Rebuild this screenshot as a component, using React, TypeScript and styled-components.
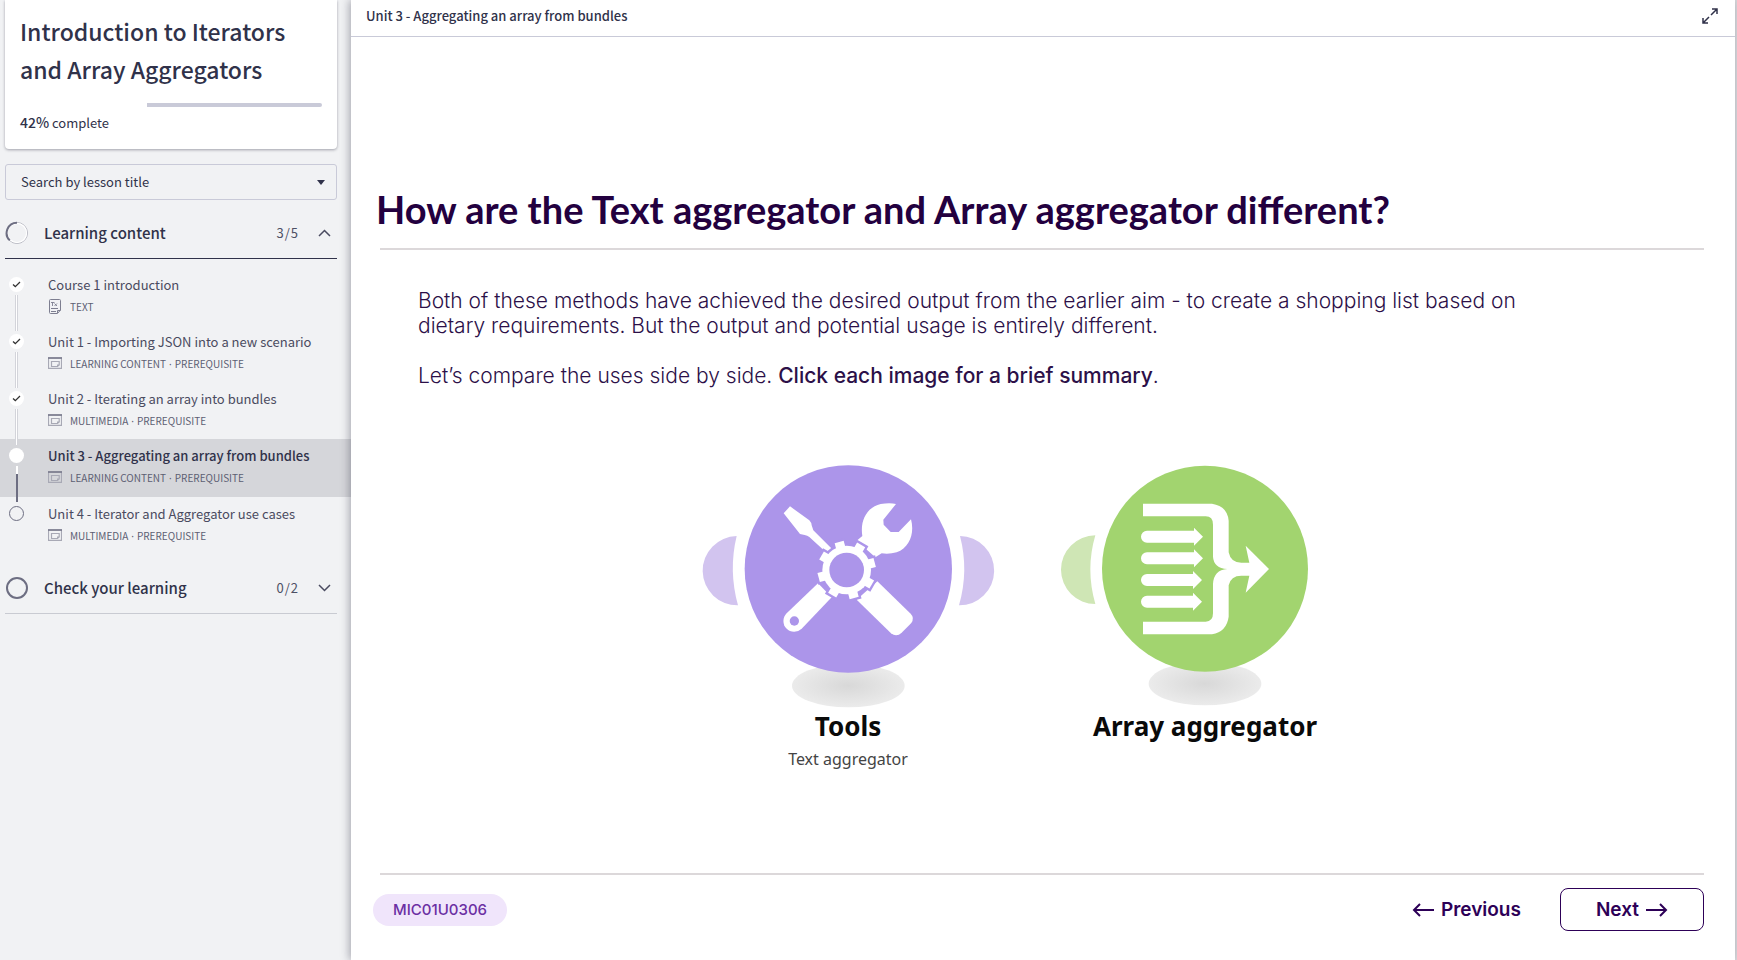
import React from "react";
import styled, { createGlobalStyle, css } from "styled-components";

const GlobalStyle = createGlobalStyle`
  *, *::before, *::after { box-sizing: border-box; }
  body { margin: 0; background: #f1f2f4; }
  h1, h2, p, ul { margin: 0; padding: 0; }
  ul { list-style: none; }
  button, select { font: inherit; color: inherit; }
`;

const sans = `"Noto Sans CJK SC", "Noto Sans", sans-serif`;
const inter = `Inter, "Liberation Sans", sans-serif`;

const Page = styled.div`
  display: flex;
  min-height: 100vh;
  padding-right: 2px;
  background: #d9d9dc;
  font-family: ${sans};
  color: #30324a;
`;

const Sidebar = styled.aside`
  flex: 0 0 351px;
  background: #f1f2f4;
`;

const CourseCard = styled.section`
  margin: 0 14px 0 5px;
  padding: 12px 15px 16px;
  background: #fff;
  border-radius: 0 0 4px 4px;
  box-shadow: 0 1px 3px rgba(40, 40, 60, 0.4);
`;

const CourseTitle = styled.h1`
  font-size: 23px;
  line-height: 38px;
  font-weight: 500;
`;

const Track = styled.div`
  height: 4px;
  margin-top: 15px;
  border-radius: 2px;
  background: #fff;
  overflow: hidden;
`;

const TrackRest = styled.div`
  height: 100%;
  margin-left: auto;
  background: #c9cad8;
`;

const Completion = styled.p`
  margin-top: 5px;
  font-size: 13px;
  line-height: 21px;
  strong { font-size: 14px; font-weight: 500; }
`;

const SearchBox = styled.div`
  display: grid;
  align-items: center;
  margin: 15px 14px 0 5px;
  & > * { grid-area: 1 / 1; }
  svg { justify-self: end; margin-right: 12px; pointer-events: none; }
`;

const SearchSelect = styled.select`
  appearance: none;
  width: 100%;
  height: 36px;
  padding: 0 32px 2px 15px;
  border: 1px solid #c9cad8;
  border-radius: 3px;
  background: transparent;
  font-size: 13px;
`;

const SectionHead = styled.button<{ $open?: boolean }>`
  display: flex;
  align-items: center;
  width: calc(100% - 19px);
  height: 51px;
  margin: 8px 14px 0 5px;
  padding: 0 6px 0 0;
  border: 0;
  border-bottom: 1px solid ${(p) => (p.$open ? "#30324a" : "#c9cbd2")};
  background: none;
  text-align: left;
  cursor: pointer;
`;

const SectionName = styled.span`
  flex: 1;
  margin-left: 15px;
  padding-bottom: 2px;
  font-size: 15px;
  font-weight: 500;
`;

const SectionCount = styled.span`
  margin-right: 19px;
  padding-bottom: 2px;
  font-size: 13px;
  letter-spacing: 1px;
  color: #4e5064;
`;

const LessonList = styled.ul`
  margin: 9px 0;
`;

const Lesson = styled.li<{ $active?: boolean }>`
  height: ${(p) => (p.$active ? 58 : 57)}px;
  background: ${(p) => (p.$active ? "#d5d6da" : "transparent")};
`;

const LessonLink = styled.a`
  display: flex;
  height: 100%;
  color: inherit;
  text-decoration: none;
`;

const Rail = styled.span`
  position: relative;
  z-index: 1;
  display: flex;
  flex-direction: column;
  align-items: center;
  gap: 3px;
  width: 33px;
  margin-bottom: -6px;
  padding-top: 9px;
`;

const Dot = styled.span<{ $hollow?: boolean }>`
  display: flex;
  align-items: center;
  justify-content: center;
  width: 15px;
  height: 15px;
  border-radius: 50%;
  ${(p) =>
    p.$hollow
      ? css`border: 1px solid #6d6e82;`
      : css`background: #fff;`}
`;

const Connector = styled.span<{ $pending?: boolean }>`
  width: 3px;
  height: 36px;
  ${(p) =>
    p.$pending
      ? css`background: linear-gradient(#fff 8px, #6d6e82 8px); width: 2px;`
      : css`background: #fff; border: solid #d3d4da; border-width: 0 1px;`}
`;

const LessonText = styled.span`
  display: flex;
  flex-direction: column;
  margin-left: 15px;
  padding-top: 7px;
`;

const LessonTitle = styled.span<{ $active?: boolean }>`
  font-size: 13px;
  line-height: 20px;
  font-weight: ${(p) => (p.$active ? 500 : 400)};
  color: ${(p) => (p.$active ? "#30324a" : "#4a4b60")};
`;

const LessonMeta = styled.span`
  display: flex;
  align-items: center;
  gap: 8px;
  height: 22px;
  font-size: 10px;
  color: #5d5f73;
  svg { width: 14px; }
`;

const MetaItem = styled.span`
  & + &::before {
    content: "·";
    margin: 0 3px 0 -5px;
    font-family: "Noto Sans", sans-serif;
  }
`;

const Main = styled.main`
  position: relative;
  z-index: 2;
  flex: 1;
  min-width: 0;
  display: flex;
  flex-direction: column;
  background: #fff;
  box-shadow: -2px 0 8px rgba(40, 40, 60, 0.35);
`;

const TopBar = styled.header`
  display: flex;
  align-items: center;
  justify-content: space-between;
  height: 37px;
  padding: 0 17px 5px 15px;
  border-bottom: 1px solid #c9cad8;
  font-size: 13px;
  font-weight: 500;
`;

const IconButton = styled.button`
  display: flex;
  padding: 0;
  border: 0;
  background: none;
  cursor: pointer;
`;

const Slide = styled.article`
  flex: 1;
  display: flex;
  flex-direction: column;
  padding: 148px 31px 0 29px;
  font-family: ${inter};
  color: #2c1048;
`;

const SlideTitle = styled.h2`
  margin-left: -4px;
  padding-bottom: 15px;
  font-family: Lato, ${inter};
  font-size: 38px;
  line-height: 48px;
  font-weight: 700;
  color: #23003f;
`;

const Rule = styled.hr`
  width: 100%;
  height: 2px;
  margin: 0;
  border: 0;
  background: #dcd8da;
`;

const Copy = styled.div`
  display: grid;
  gap: 25px;
  padding: 38px 160px 0 38px;
  font-size: 21px;
  line-height: 25px;
  font-weight: 300;
  strong { font-weight: 500; }
`;

const Nodes = styled.div`
  flex: 1;
  display: flex;
  align-items: flex-start;
  justify-content: center;
  gap: 57px;
  padding: 75px 31px 0 0;
`;

const NodeButton = styled.button`
  display: flex;
  flex-direction: column;
  align-items: center;
  padding: 0;
  border: 0;
  background: none;
  font-family: "Noto Sans", "Open Sans", sans-serif;
  cursor: pointer;
`;

const NodeName = styled.span`
  font-size: 26px;
  line-height: 34px;
  font-weight: 700;
  color: #0a0a0a;
`;

const NodeDetail = styled.span`
  font-size: 16px;
  line-height: 32px;
  color: #444;
`;

const Footer = styled.footer`
  display: flex;
  align-items: center;
  height: 85px;
  padding-bottom: 16px;
`;

const Code = styled.span`
  margin: 0 auto 0 -7px;
  padding: 0 20px;
  border-radius: 16px;
  background: #f0e5fb;
  font-size: 15px;
  line-height: 32px;
  font-weight: 500;
  color: #6b2fa3;
`;

const NavButton = styled.button<{ $outlined?: boolean }>`
  display: flex;
  align-items: center;
  justify-content: center;
  gap: 7px;
  height: 43px;
  padding: 0 ${(p) => (p.$outlined ? 35 : 0)}px;
  margin-left: ${(p) => (p.$outlined ? 39 : 0)}px;
  border: ${(p) => (p.$outlined ? "1px solid #2d0057" : "0")};
  border-radius: 8px;
  background: none;
  font-size: 19px;
  font-weight: 600;
  color: #2d0057;
  cursor: pointer;
`;

const Chevron = ({ up }: { up?: boolean }) => (
  <svg width="13" height="8" viewBox="0 0 13 8" fill="none" stroke="#4a4b60" strokeWidth="1.5">
    <path d={up ? "M1 7 6.500 1.500 12 7" : "M1 1 6.500 6.500 12 1"} />
  </svg>
);

const ProgressRing = () => (
  <svg width="24" height="24" viewBox="0 0 24 24" fill="none">
    <circle cx="12" cy="12" r="10.500" stroke="#b4b5bf" />
    <circle cx="12" cy="12" r="9.600" stroke="#fff" strokeWidth="1.200" />
    <path d="M12 1.700A10.300 10.300 0 0 0 4.800 19.400" stroke="#6d6e82" strokeWidth="2" />
  </svg>
);

const EmptyRing = () => (
  <svg width="24" height="24" viewBox="0 0 24 24" fill="none">
    <circle cx="12" cy="12" r="10" stroke="#6d6e82" strokeWidth="2" />
  </svg>
);

const Check = () => (
  <svg width="9" height="7" viewBox="0 0 9 7" fill="none" stroke="#333" strokeWidth="1.300">
    <path d="M1 3.500 3.300 5.600 8 1" />
  </svg>
);

const DocIcon = () => (
  <svg height="15" viewBox="0 0 14 15" fill="none" stroke="#7d7e90">
    <path d="M1.500 1.500Q1.500.500 2.500.500H11.500Q12.500.500 12.500 1.500V11L9.500 14.500H2.500Q1.500 14.500 1.500 13.500ZM9.500 14V11.500H12.500M3 9.500H10M3 12.500H8" />
    <path d="M3 3.500H6.500M4.500 3.500V7M6.500 4.500 9 7M9 4.500 6.500 7" strokeWidth=".900" />
  </svg>
);

const WindowIcon = () => (
  <svg height="12" viewBox="0 0 14 12" fill="none" stroke="#a8a9b5" strokeWidth="1.200">
    <path d="M.500 1V11.400H13.500V1M3.500 4.500H11.200V8L9.500 9.500H3.500Z" />
    <path d="M11.500 7.500H9V9.800Z" fill="#a8a9b5" stroke="none" />
    <path d="M0 1H14" stroke="#7d7e90" strokeWidth="1.800" />
  </svg>
);

const ExpandIcon = () => (
  <svg width="16" height="16" viewBox="0 0 16 16" fill="none" stroke="#30324a" strokeWidth="1.500">
    <path d="M9 7 15 1M10 1H15V6M7 9 1 15M1 10V15H6" />
  </svg>
);

const Arrow = ({ left }: { left?: boolean }) => (
  <svg width="22" height="14" viewBox="0 0 22 14" fill="none" stroke="#2d0057" strokeWidth="2">
    <path d={left ? "M22 7H2M8 1 2 7 8 13" : "M0 7H20M14 1 20 7 14 13"} />
  </svg>
);

const Shadow = ({ id, cx, cy }: { id: string; cx: number; cy: number }) => (
  <>
    <radialGradient id={id}>
      <stop offset="0" stopColor="#d8d8d8" />
      <stop offset="1" stopColor="#ebebeb" />
    </radialGradient>
    <ellipse cx={cx} cy={cy} rx="169" ry="65" fill={`url(#${id})`} />
  </>
);

const Gear = () => (
  <>
    <circle cx="470" cy="358" r="73" />
    {[-105, -60, -15, 30, 75, 120, 165, 210].map((angle) => (
      <path key={angle} d="M530 344H557V372H530Z" transform={`rotate(${angle} 470 358)`} />
    ))}
  </>
);

const ToolsArt = () => (
  <svg width="300" height="246" viewBox="24 37 900 738">
    <Shadow id="tools-shadow" cx={475} cy={705} />
    <g fill="#d2c4ef">
      <path d="M140 256A104 104 0 0 0 144 464Q115 360 140 256Z" />
      <path d="M810 256A104 104 0 0 1 807 464Q837 360 810 256Z" />
    </g>
    <circle cx="475" cy="355" r="311" fill="#ac95ea" />
    <g fill="#fff">
      <path d="M281 188 300 167 358 209Q364 215 365 224L370 239 424 293 408 305 358 259Q352 254 344 253L330 250Z" />
      <path d="M618 160 580 207 581 222 602 244H626L663 206C674 246 660 290 620 305Q598 311 575 308L556 320 500 270 517 256C509 205 535 168 572 160Q600 156 618 160Z" />
      <path d="M384 398 290 488A31 31 0 0 0 335 534L425 440Z" />
      <path d="M562 392 662 489Q674 501 664 517L635 546Q620 560 603 548L500 447Z" />
    </g>
    <circle cx="313" cy="511" r="14" fill="#ac95ea" />
    <g fill="#ac95ea" stroke="#ac95ea" strokeWidth="14"><Gear /></g>
    <g fill="#fff"><Gear /></g>
    <circle cx="470" cy="358" r="52" fill="#ac95ea" />
  </svg>
);

const ArrayArt = () => (
  <svg width="300" height="246" viewBox="45 37 900 738">
    <Shadow id="array-shadow" cx={495} cy={699} />
    <path d="M166 254A103 103 0 0 0 166 460Q136 356 166 254Z" fill="#cfe6b5" />
    <circle cx="495" cy="354" r="309" fill="#a2d46f" />
    <g fill="#fff">
      <path d="M309 159H516Q562 166 566 210V305Q572 336 604 336H628L617 285 687 355 617 426 628 375H604Q572 375 566 404V498Q560 543 516 551H309V513H497Q519 513 519 488V400Q521 358 562 355Q521 352 519 318V222Q519 197 497 197H309Z" />
      {[
        [489, 258],
        [489, 323],
        [486, 388],
        [486, 453],
      ].map(([x, y]) => (
        <path key={y} d={`M321 ${y - 18}H${x - 27}V${y - 27}L${x} ${y}L${x - 27} ${y + 27}V${y + 18}H321A18 18 0 0 1 321 ${y - 18}Z`} />
      ))}
    </g>
  </svg>
);

type LessonData = {
  title: string;
  meta: string[];
  state: "done" | "current" | "todo";
  doc?: boolean;
};

const lessons: LessonData[] = [
  { title: "Course 1 introduction", meta: ["TEXT"], state: "done", doc: true },
  { title: "Unit 1 - Importing JSON into a new scenario", meta: ["LEARNING CONTENT", "PREREQUISITE"], state: "done" },
  { title: "Unit 2 - Iterating an array into bundles", meta: ["MULTIMEDIA", "PREREQUISITE"], state: "done" },
  { title: "Unit 3 - Aggregating an array from bundles", meta: ["LEARNING CONTENT", "PREREQUISITE"], state: "current" },
  { title: "Unit 4 - Iterator and Aggregator use cases", meta: ["MULTIMEDIA", "PREREQUISITE"], state: "todo" },
];

const progress = 42;

export default function App() {
  return (
    <>
      <GlobalStyle />
      <Page>
        <Sidebar>
          <CourseCard>
            <CourseTitle>Introduction to Iterators and Array Aggregators</CourseTitle>
            <Track role="progressbar" aria-label="Course progress" aria-valuenow={progress} aria-valuemin={0} aria-valuemax={100}>
              <TrackRest style={{ width: `${100 - progress}%` }} />
            </Track>
            <Completion><strong>{progress}%</strong> complete</Completion>
          </CourseCard>
          <SearchBox>
            <SearchSelect aria-label="Search by lesson title">
              <option>Search by lesson title</option>
            </SearchSelect>
            <svg width="8" height="5" viewBox="0 0 8 5" fill="#30324a"><path d="M0 0H8L4 5Z" /></svg>
          </SearchBox>
          <SectionHead $open aria-expanded="true">
            <ProgressRing />
            <SectionName>Learning content</SectionName>
            <SectionCount>3/5</SectionCount>
            <Chevron up />
          </SectionHead>
          <LessonList>
            {lessons.map((lesson, i) => {
              const active = lesson.state === "current";
              return (
                <Lesson key={lesson.title} $active={active}>
                  <LessonLink href="#" aria-current={active ? "page" : undefined}>
                    <Rail>
                      <Dot $hollow={lesson.state === "todo"}>{lesson.state === "done" && <Check />}</Dot>
                      {i < lessons.length - 1 && <Connector $pending={active} />}
                    </Rail>
                    <LessonText>
                      <LessonTitle $active={active}>{lesson.title}</LessonTitle>
                      <LessonMeta>
                        {lesson.doc ? <DocIcon /> : <WindowIcon />}
                        {lesson.meta.map((item) => <MetaItem key={item}>{item}</MetaItem>)}
                      </LessonMeta>
                    </LessonText>
                  </LessonLink>
                </Lesson>
              );
            })}
          </LessonList>
          <SectionHead aria-expanded="false">
            <EmptyRing />
            <SectionName>Check your learning</SectionName>
            <SectionCount>0/2</SectionCount>
            <Chevron />
          </SectionHead>
        </Sidebar>
        <Main>
          <TopBar>
            <span>Unit 3 - Aggregating an array from bundles</span>
            <IconButton aria-label="Full screen"><ExpandIcon /></IconButton>
          </TopBar>
          <Slide>
            <SlideTitle>How are the Text aggregator and Array aggregator different?</SlideTitle>
            <Rule />
            <Copy>
              <p>
                Both of these methods have achieved the desired output from the earlier aim - to create a shopping list based on dietary requirements. But the output and potential usage is entirely different.
              </p>
              <p>Let’s compare the uses side by side. <strong>Click each image for a brief summary</strong>.</p>
            </Copy>
            <Nodes>
              <NodeButton>
                <ToolsArt />
                <NodeName>Tools</NodeName>
                <NodeDetail>Text aggregator</NodeDetail>
              </NodeButton>
              <NodeButton>
                <ArrayArt />
                <NodeName>Array aggregator</NodeName>
              </NodeButton>
            </Nodes>
            <Rule />
            <Footer>
              <Code>MIC01U0306</Code>
              <NavButton><Arrow left />Previous</NavButton>
              <NavButton $outlined>Next<Arrow /></NavButton>
            </Footer>
          </Slide>
        </Main>
      </Page>
    </>
  );
}
